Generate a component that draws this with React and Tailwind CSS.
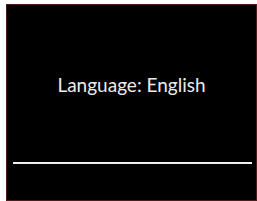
import React from "react";

const App = () => {
  return (
    <div className="w-[257px] h-[201px] bg-white pl-[6px] pt-[4px] flex">
      <div className="flex-1 bg-black border border-[#4a1c1c] flex flex-col">
        <div
          className="h-[150px] flex items-center justify-center text-[#ececec] text-[19px] pt-[10px]"
          style={{ fontFamily: "Lato, sans-serif" }}
        >
          Language: English
        </div>
        <div className="h-[2px] bg-[#f0f0f0] ml-[6px] mr-[4px] mt-[7px]"></div>
      </div>
    </div>
  );
};

export default App;
